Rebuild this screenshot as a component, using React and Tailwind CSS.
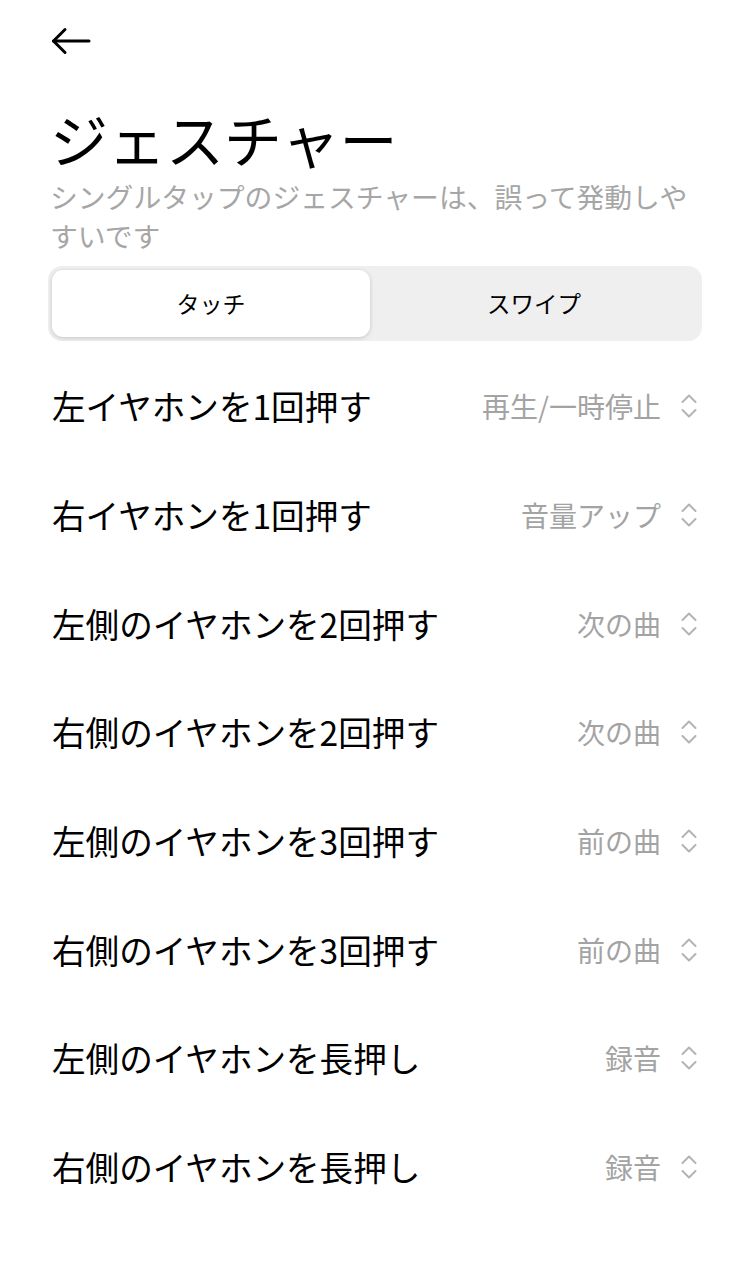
import React from "react";

const rows = [
  ["左イヤホンを1回押す", "再生/一時停止"],
  ["右イヤホンを1回押す", "音量アップ"],
  ["左側のイヤホンを2回押す", "次の曲"],
  ["右側のイヤホンを2回押す", "次の曲"],
  ["左側のイヤホンを3回押す", "前の曲"],
  ["右側のイヤホンを3回押す", "前の曲"],
  ["左側のイヤホンを長押し", "録音"],
  ["右側のイヤホンを長押し", "録音"],
];

function Chevrons() {
  return (
    <svg width="18" height="26" viewBox="0 0 18 26" fill="none" stroke="#b3b3b3" strokeWidth="2" strokeLinecap="round" strokeLinejoin="round">
      <path d="M2.5 9 L9 2.5 L15.5 9" />
      <path d="M2.5 17 L9 23.5 L15.5 17" />
    </svg>
  );
}

export default function App() {
  return (
    <div
      className="w-[750px] h-[1286px] bg-white overflow-hidden"
      style={{ fontFamily: '"Noto Sans CJK JP", "Noto Sans", sans-serif' }}
    >
      <div className="pl-[50px] pr-[48px]">
        <div className="h-[82px] flex items-center">
          <svg width="40" height="28" viewBox="0 0 40 28" fill="none" stroke="#000" strokeWidth="3" strokeLinecap="round" strokeLinejoin="round" className="ml-[1px]">
            <path d="M2.5 14 H38" />
            <path d="M14 2.5 L2.5 14 L14 25.5" />
          </svg>
        </div>
        <h1 className="text-[58px] leading-[80px] text-black mt-[16px] font-normal">ジェスチャー</h1>
        <p className="text-[27.8px] leading-[39px] text-[#a6a6a6] -mt-[1px]">
          シングルタップのジェスチャーは、誤って発動しやすいです
        </p>
        <div className="mt-[11px] -ml-[2px] w-[654px] h-[75px] rounded-[14px] bg-[#efefef] p-[4px] flex">
          <div className="w-[318px] h-full rounded-[11px] bg-white shadow-[0_1px_4px_rgba(0,0,0,0.18)] flex items-center justify-center text-[23px] text-black">
            タッチ
          </div>
          <div className="flex-1 flex items-center justify-center text-[23.5px] text-black">
            スワイプ
          </div>
        </div>
        <div className="mt-[11px]">
          {rows.map(([label, value], i) => (
            <div key={i} className="h-[108.7px] flex items-center justify-between">
              <span className="text-[33.6px] text-black ml-[2px]">{label}</span>
              <span className="flex items-center gap-[19px]">
                <span className="text-[28px] text-[#a3a3a3]">{value}</span>
                <span className="mr-[4px] flex"><Chevrons /></span>
              </span>
            </div>
          ))}
        </div>
      </div>
    </div>
  );
}
